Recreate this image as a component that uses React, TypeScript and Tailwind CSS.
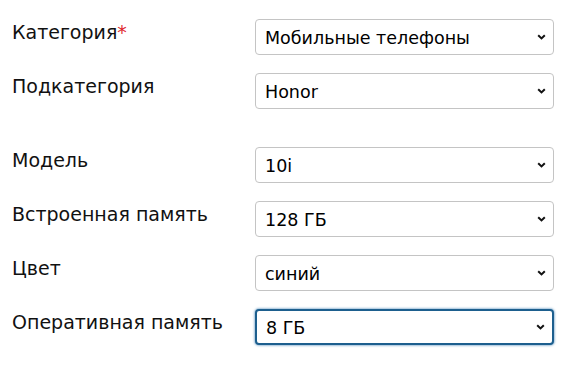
import React from 'react';

type Field = {
  label: string;
  value: string;
  required?: boolean;
  focused?: boolean;
  gapBefore?: boolean;
};

const fields: Field[] = [
  { label: 'Категория', value: 'Мобильные телефоны', required: true },
  { label: 'Подкатегория', value: 'Honor' },
  { label: 'Модель', value: '10i', gapBefore: true },
  { label: 'Встроенная память', value: '128 ГБ' },
  { label: 'Цвет', value: 'синий' },
  { label: 'Оперативная память', value: '8 ГБ', focused: true },
];

const Chevron = () => (
  <svg width="9" height="6" viewBox="0 0 9 6" className="pointer-events-none absolute right-[7px] top-1/2 -translate-y-1/2">
    <path d="M1.2 1.2 L4.5 4.4 L7.8 1.2" fill="none" stroke="#111" strokeWidth="2" />
  </svg>
);

const SelectBox = ({ value, focused }: { value: string; focused?: boolean }) => (
  <div
    className={`relative flex h-9 w-[299px] items-center rounded bg-white pl-[9px] pt-[3px] text-[17.5px] text-black ${
      focused
        ? 'border-2 border-[#1d5f8e] pl-[8px] shadow-[0_0_2px_1px_rgba(80,140,190,0.55)]'
        : 'border border-[#c4c4c4]'
    }`}
  >
    <span className="leading-none">{value}</span>
    <Chevron />
  </div>
);

export default function App() {
  return (
    <div className="min-h-screen bg-white pl-3 pt-[19px] font-['DejaVu_Sans',sans-serif]">
      <div className="flex flex-col gap-[18px]">
        {fields.map((f) => (
          <div key={f.label} className={`flex items-start ${f.gapBefore ? 'mt-5' : ''}`}>
            <div className="w-[243px] pt-px text-[19px] leading-6 text-[#111]">
              {f.label}
              {f.required && <span className="text-[#e0262b]">*</span>}
            </div>
            <SelectBox value={f.value} focused={f.focused} />
          </div>
        ))}
      </div>
    </div>
  );
}
